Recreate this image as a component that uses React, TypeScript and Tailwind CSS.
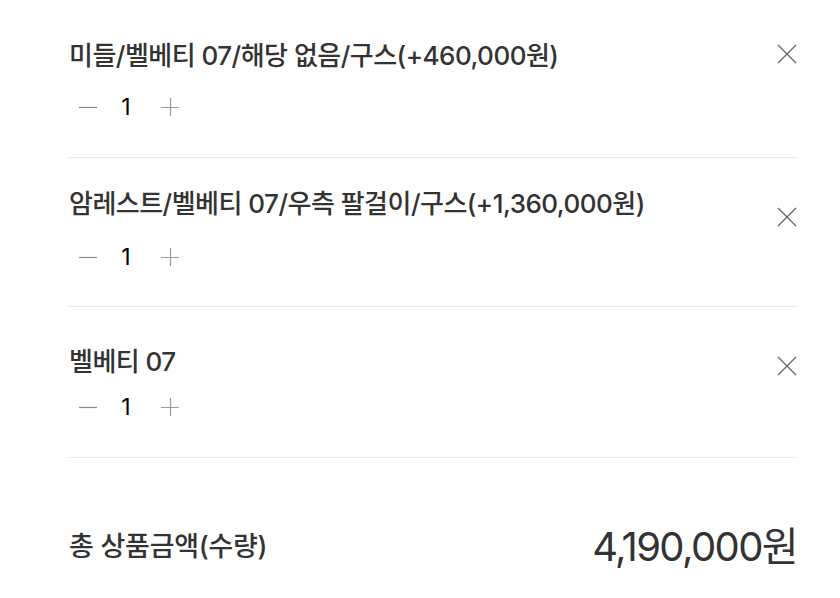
import React from "react";

type Item = {
  name: string;
  qty: number;
  pad: string;
  gap: string;
  closeTop: string;
};

const items: Item[] = [
  { name: "미들/벨베티 07/해당 없음/구스(+460,000원)", qty: 1, pad: "pt-[40px] pb-[35px]", gap: "mt-[20px]", closeTop: "mt-[4px]" },
  { name: "암레스트/벨베티 07/우측 팔걸이/구스(+1,360,000원)", qty: 1, pad: "pt-[30px] pb-[34px]", gap: "mt-[22px]", closeTop: "mt-[19px]" },
  { name: "벨베티 07", qty: 1, pad: "pt-[39px] pb-[35px]", gap: "mt-[14px]", closeTop: "mt-[10px]" },
];

const Minus = () => (
  <svg width="18" height="18" viewBox="0 0 18 18" fill="none">
    <path d="M0 9.5h18" stroke="#8a8a8a" strokeWidth="1.2" />
  </svg>
);

const Plus = () => (
  <svg width="18" height="18" viewBox="0 0 18 18" fill="none">
    <path d="M0 9.5h18M9.5 0v18" stroke="#9a9a9a" strokeWidth="1.2" />
  </svg>
);

const Close = () => (
  <svg width="20" height="20" viewBox="0 0 20 20" fill="none">
    <path d="M1 1l18 18M19 1L1 19" stroke="#666" strokeWidth="1.3" />
  </svg>
);

export default function App() {
  return (
    <div
      className="w-[840px] h-[598px] bg-white pl-[69px] pr-[43px] overflow-hidden"
      style={{ fontFamily: 'Inter, "Noto Sans CJK KR", sans-serif' }}
    >
      {items.map((item, i) => (
        <div key={i} className={`flex justify-between border-b border-[#e8e8e8] ${item.pad}`}>
          <div className="flex flex-col">
            <div className="text-[26px] leading-[32px] font-medium text-[#333] tracking-[-0.02em]">{item.name}</div>
            <div className={`flex items-center h-[30px] ${item.gap}`}>
              <button className="w-[38px] flex justify-center">
                <Minus />
              </button>
              <span className="w-[38px] text-center text-[23px] leading-[30px] text-black">{item.qty}</span>
              <button className="w-[50px] flex justify-center">
                <Plus />
              </button>
            </div>
          </div>
          <button className={`self-start ${item.closeTop}`}>
            <Close />
          </button>
        </div>
      ))}
      <div className="flex justify-between items-center mt-[65px]">
        <span className="whitespace-nowrap text-[27px] leading-[34px] font-medium text-[#333] tracking-[-0.01em]">
          총 상품금액(수량)
        </span>
        <span className="whitespace-nowrap text-[40px] leading-[48px] text-[#333] tracking-[-0.04em]">
          4,190,000원
        </span>
      </div>
    </div>
  );
}
